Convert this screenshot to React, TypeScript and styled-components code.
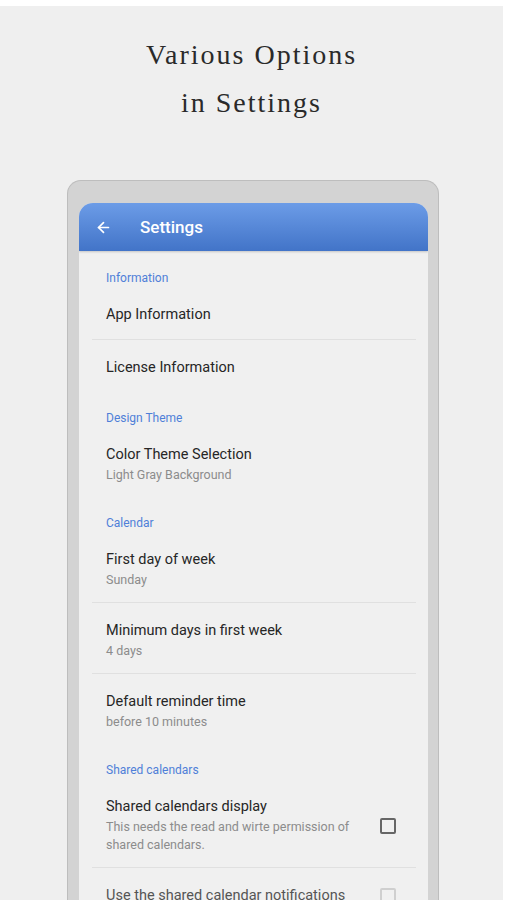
import styled, { createGlobalStyle } from "styled-components";
import { ArrowLeft } from "lucide-react";

const Global = createGlobalStyle`
  html, body {
    margin: 0;
    padding: 0;
    background: #fff;
  }
`;

const Panel = styled.div`
  margin-top: 6px;
  width: 503px;
  height: 894px;
  background: #efefef;
  overflow: hidden;
`;

const Heading = styled.h1`
  margin: 0;
  padding-top: 25px;
  font-family: "Liberation Serif", "DejaVu Serif", serif;
  font-weight: normal;
  font-size: 28px;
  line-height: 48px;
  letter-spacing: 2px;
  color: #2a2a2a;
  text-align: center;
`;

const Phone = styled.div`
  margin: 53px 0 0 67px;
  width: 349px;
  height: 760px;
  padding: 22px 10px 0 11px;
  background: #d3d3d3;
  border: 1px solid #bdbdbd;
  border-bottom: none;
  border-radius: 14px 14px 0 0;
`;

const Screen = styled.div`
  height: 100%;
  background: #f0f0f0;
  border-radius: 14px 14px 0 0;
  overflow: hidden;
  font-family: Roboto, "Noto Sans", sans-serif;
`;

const AppBar = styled.div`
  height: 48px;
  display: flex;
  align-items: center;
  padding-left: 16px;
  background: linear-gradient(#6c9ce7, #4274c8);
  box-shadow: 0 1px 2px rgba(0, 0, 0, 0.18);
  color: #fff;
`;

const BarTitle = styled.span`
  margin-left: 28px;
  font-size: 17px;
  font-weight: 500;
`;

const List = styled.div`
  padding-top: 1px;
`;

const Category = styled.div`
  padding: 18px 0 1px 27px;
  font-size: 12px;
  line-height: 16px;
  color: #4f7fd8;
`;

const Row = styled.div<{ $divider?: boolean; $single?: boolean }>`
  display: flex;
  align-items: center;
  padding: 18px 32px ${(p) => (p.$single ? 14 : 13)}px 27px;
  position: relative;
  border-bottom: ${(p) => (p.$divider ? "1px solid transparent" : "none")};
  &::after {
    content: "";
    display: ${(p) => (p.$divider ? "block" : "none")};
    position: absolute;
    left: 13px;
    right: 12px;
    bottom: -1px;
    height: 1px;
    background: #e0e0e0;
  }
`;

const Texts = styled.div`
  flex: 1;
  min-width: 0;
  padding-right: 14px;
`;

const Title = styled.div<{ $disabled?: boolean }>`
  font-size: 14.5px;
  line-height: 20px;
  color: ${(p) => (p.$disabled ? "#555" : "#262626")};
`;

const Summary = styled.div`
  margin-top: 1px;
  font-size: 12.5px;
  line-height: 18px;
  color: #8c8c8c;
`;

const Check = styled.div<{ $disabled?: boolean }>`
  width: 12px;
  height: 12px;
  border: 2px solid ${(p) => (p.$disabled ? "#cfcfcf" : "#666")};
  border-radius: 2px;
  flex: none;
`;

type Item = {
  title: string;
  summary?: string;
  divider?: boolean;
  check?: "on" | "off";
};

type Section = { name: string; items: Item[] };

const sections: Section[] = [
  {
    name: "Information",
    items: [
      { title: "App Information", divider: true },
      { title: "License Information" },
    ],
  },
  {
    name: "Design Theme",
    items: [{ title: "Color Theme Selection", summary: "Light Gray Background" }],
  },
  {
    name: "Calendar",
    items: [
      { title: "First day of week", summary: "Sunday", divider: true },
      { title: "Minimum days in first week", summary: "4 days", divider: true },
      { title: "Default reminder time", summary: "before 10 minutes" },
    ],
  },
  {
    name: "Shared calendars",
    items: [
      {
        title: "Shared calendars display",
        summary: "This needs the read and wirte permission of shared calendars.",
        divider: true,
        check: "on",
      },
      { title: "Use the shared calendar notifications", check: "off" },
    ],
  },
];

export default function App() {
  return (
    <>
      <Global />
      <Panel>
        <Heading>
          Various Options
          <br />
          in Settings
        </Heading>
        <Phone>
          <Screen>
            <AppBar>
              <ArrowLeft size={17} strokeWidth={2.4} />
              <BarTitle>Settings</BarTitle>
            </AppBar>
            <List>
              {sections.map((s) => (
                <div key={s.name}>
                  <Category>{s.name}</Category>
                  {s.items.map((it) => (
                    <Row key={it.title} $divider={it.divider} $single={!it.summary}>
                      <Texts>
                        <Title $disabled={it.check === "off"}>{it.title}</Title>
                        {it.summary && <Summary>{it.summary}</Summary>}
                      </Texts>
                      {it.check && <Check $disabled={it.check === "off"} />}
                    </Row>
                  ))}
                </div>
              ))}
            </List>
          </Screen>
        </Phone>
      </Panel>
    </>
  );
}
